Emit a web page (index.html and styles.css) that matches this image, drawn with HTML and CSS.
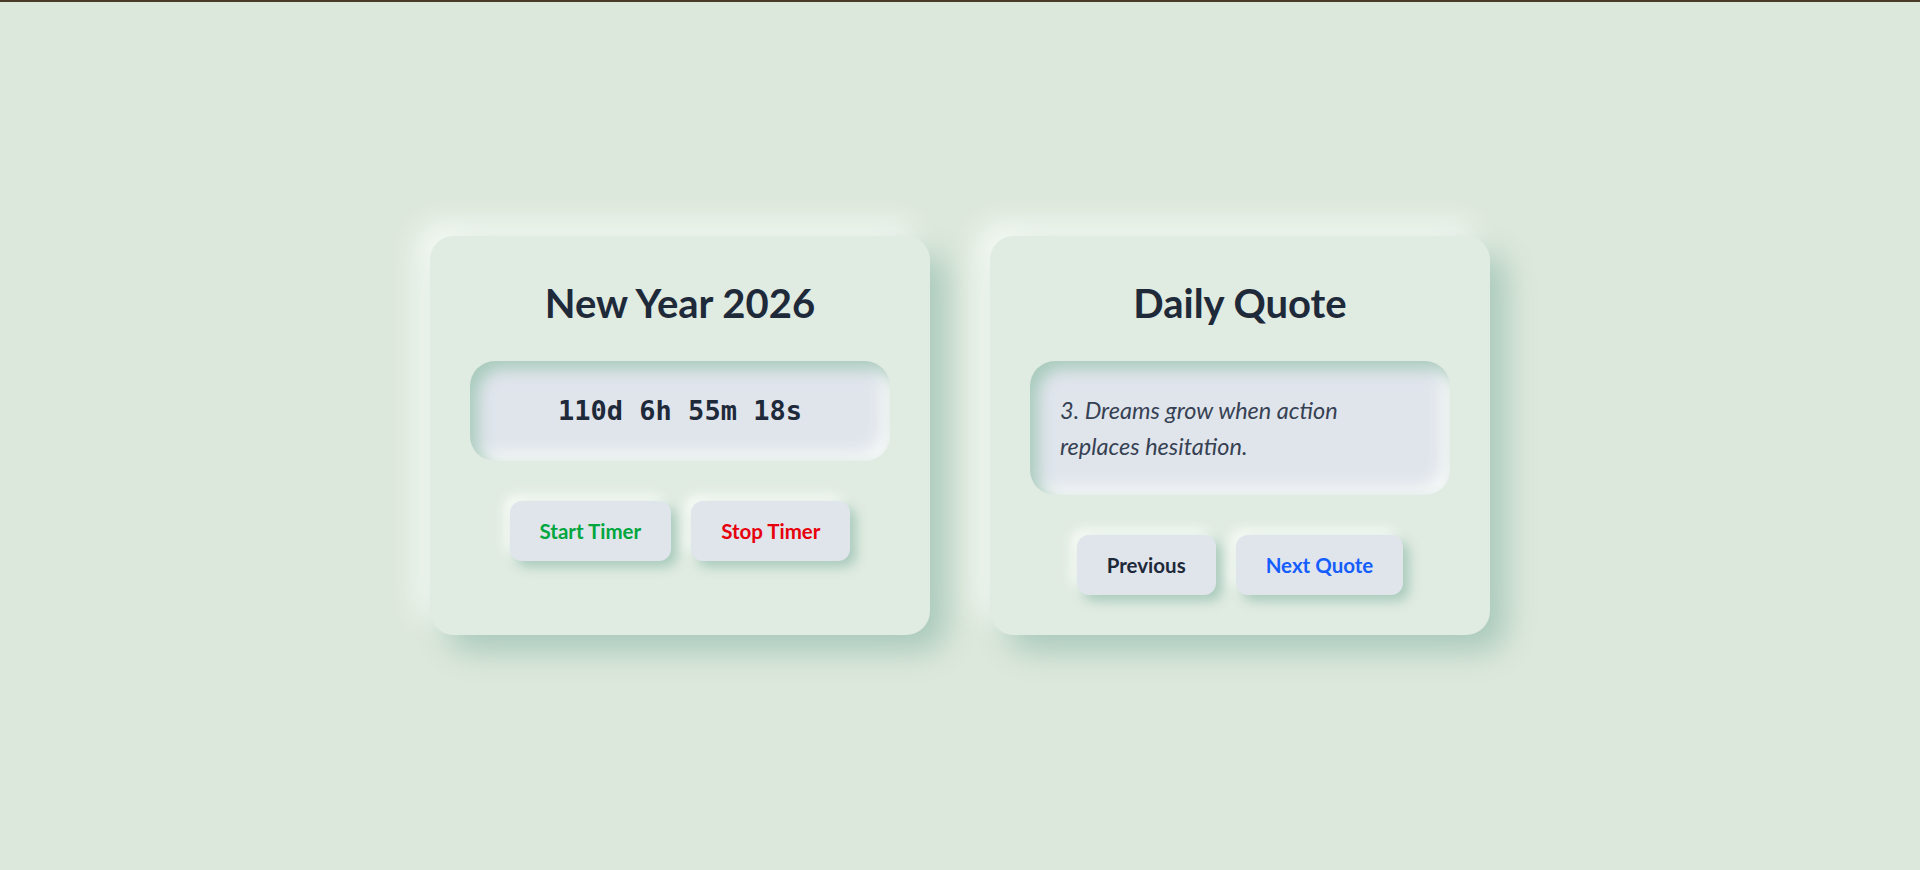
FILE: index.html
```html
<!DOCTYPE html>
<html lang="en">
<head>
<meta charset="utf-8">
<title>Neumorphic Widgets</title>
<link rel="stylesheet" href="styles.css">
</head>
<body>
<main class="page">
  <div class="row">
    <section class="card">
      <h2 class="card-title">New Year 2026</h2>
      <div class="well timer">110d 6h 55m 18s</div>
      <div class="actions">
        <button class="btn btn-green">Start Timer</button>
        <button class="btn btn-red">Stop Timer</button>
      </div>
    </section>
    <section class="card">
      <h2 class="card-title">Daily Quote</h2>
      <div class="well quote"><p class="quote-text">3. Dreams grow when action replaces hesitation.</p></div>
      <div class="actions">
        <button class="btn btn-dark">Previous</button>
        <button class="btn btn-blue">Next Quote</button>
      </div>
    </section>
  </div>
</main>
</body>
</html>
```
FILE: styles.css
```css
* { box-sizing: border-box; }
html, body { height: 100%; }
body {
  margin: 0;
  background: #dde8dc;
  border-top: 2px solid #4a3b28;
  font-family: "Lato", "Open Sans", sans-serif;
  color: #1e2939;
}
.page {
  min-height: 100%;
  display: flex;
  justify-content: center;
  align-items: center;
  padding-bottom: 2px;
}
.row {
  display: flex;
  align-items: stretch;
  gap: 60px;
}
.card {
  width: 500px;
  padding: 40px;
  background: #e0ebe1;
  border-radius: 24px;
  box-shadow: 16px 16px 32px #a8c9bb, -12px -12px 28px #f7fbf6;
}
.card-title {
  margin: 3px 0 34px;
  font-size: 40px;
  line-height: 48px;
  font-weight: 700;
  text-align: center;
  color: #1e2939;
}
.well {
  background: #e0e5ec;
  border-radius: 25px;
  box-shadow: inset 8px 8px 16px #a9cbbd, inset -8px -8px 16px #f6f9f8;
}
.timer {
  padding: 30px;
  text-align: center;
  font-family: "DejaVu Sans Mono", "Liberation Mono", monospace;
  font-weight: 700;
  font-size: 27px;
  line-height: 40px;
  color: #1e2939;
}
.quote { padding: 31px 30px; }
.quote-text {
  margin: 0;
  max-width: 320px;
  font-style: italic;
  font-size: 23.5px;
  line-height: 36px;
  color: #364153;
}
.actions {
  display: flex;
  justify-content: center;
  gap: 20px;
  margin-top: 40px;
}
.btn {
  height: 60px;
  padding: 0 30px;
  border: 0;
  border-radius: 12px;
  background: #e0e5ec;
  font-family: inherit;
  font-size: 20.5px;
  font-weight: 700;
  box-shadow: 6px 6px 12px #a9cbbd, -6px -6px 12px #f7fbf6;
  cursor: pointer;
}
.btn-green { color: #00a63e; }
.btn-red { color: #e7000b; }
.btn-dark { color: #1e2939; }
.btn-blue { color: #155dfc; }
```
